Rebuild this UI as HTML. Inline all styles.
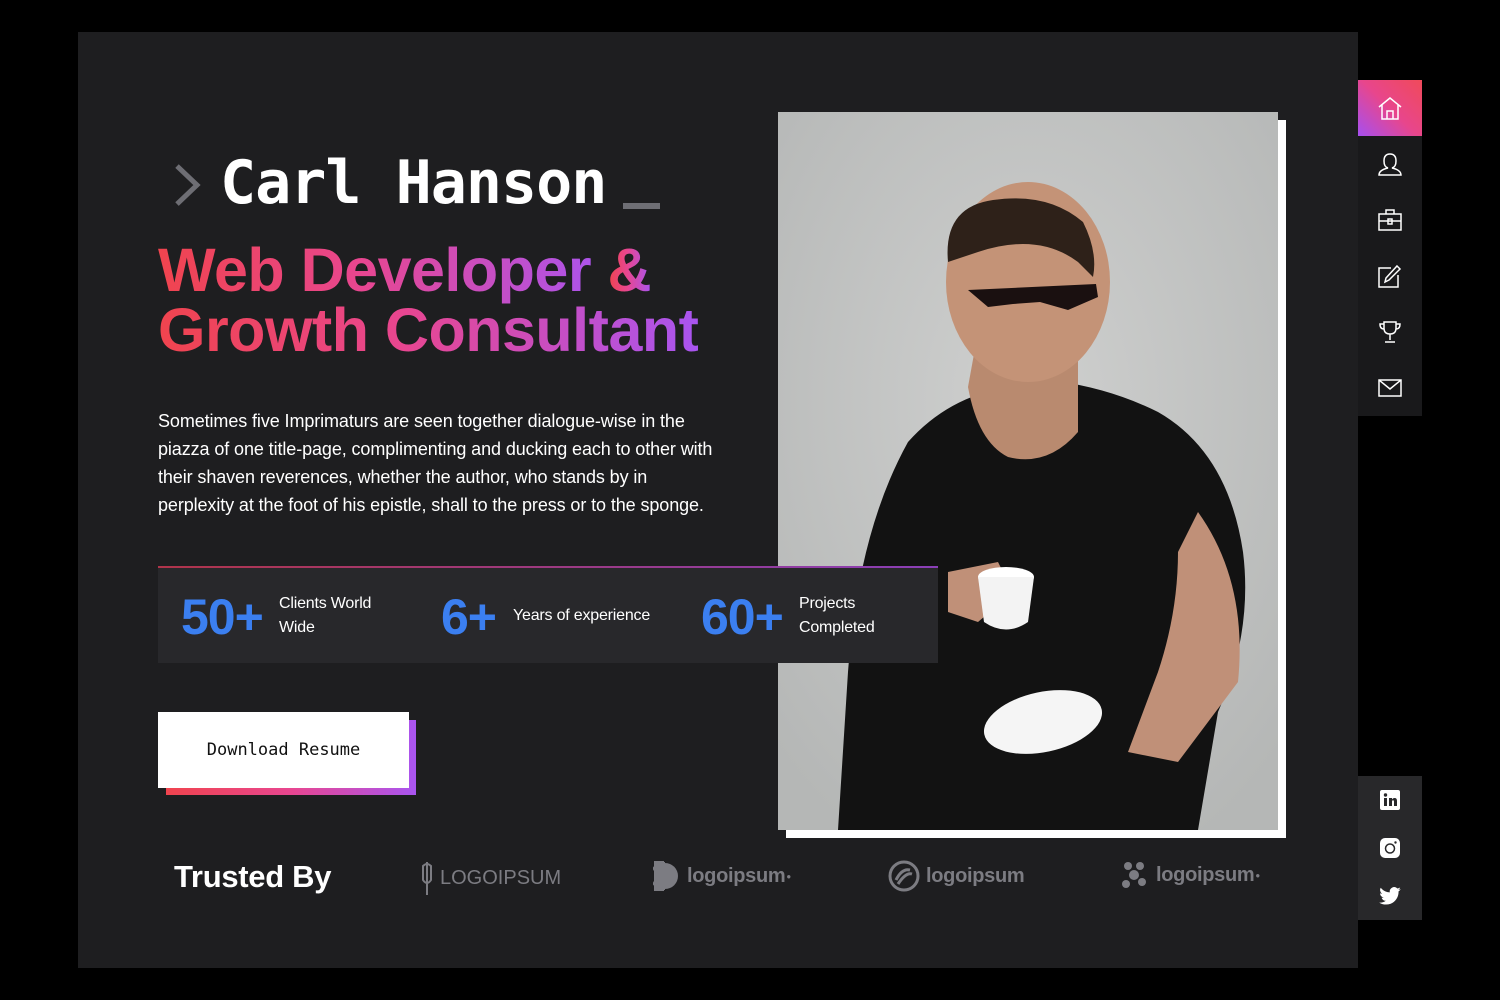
<!DOCTYPE html>
<html><head><style>
*{margin:0;padding:0;box-sizing:border-box}
body{width:1500px;height:1000px;background:#000;position:relative;overflow:hidden;font-family:"Liberation Sans",sans-serif}
.panel{position:absolute;left:78px;top:32px;width:1280px;height:936px;background:#1e1e20}
.abs{position:absolute}
.name{left:220px;top:148px;font-family:"DejaVu Sans Mono","Liberation Mono",monospace;font-weight:bold;font-size:60px;color:#fff;letter-spacing:-1px;white-space:nowrap}
.title{left:158px;top:240px;font-weight:bold;font-size:61px;line-height:60px;letter-spacing:-0.5px;white-space:nowrap}
.g{background:linear-gradient(90deg,#f0444e,#e84690 45%,#a955f0);-webkit-background-clip:text;background-clip:text;color:transparent}
.para{left:158px;top:407px;color:#fff;font-size:18px;line-height:28px;letter-spacing:-0.1px;white-space:nowrap}
.stats{left:158px;top:566px;width:780px;height:97px;background:#28282b;border-top:2px solid;border-image:linear-gradient(90deg,#b0344a,#8a3fb8) 1}
.num{color:#3b7ff0;font-weight:bold;font-size:50px;position:absolute;top:20px;letter-spacing:-1px}
.lab{color:#fff;font-size:16px;line-height:24px;position:absolute;letter-spacing:-0.2px}
.btnsh{left:166px;top:720px;width:250px;height:75px;background:linear-gradient(90deg,#f0444e,#e84690 50%,#a955f0)}
.btn{left:158px;top:712px;width:251px;height:76px;background:#fff;font-family:"DejaVu Sans Mono",monospace;font-size:17px;color:#111;text-align:center;line-height:76px}
.side{left:1358px;top:80px;width:64px;height:336px;background:#19191b}
.side div{height:56px;display:flex;align-items:center;justify-content:center}
.soc{left:1358px;top:776px;width:64px;height:144px;background:#28282a}
.soc div{height:48px;display:flex;align-items:center;justify-content:center}
.logo{color:#7c7c82;font-weight:bold;font-size:20px;display:flex;align-items:center;gap:6px;top:860px;letter-spacing:-0.3px}
</style></head><body>
<div class="panel"></div>
<svg class="abs" style="left:172px;top:162px" width="30" height="46"><path d="M5 4 L25 23 L5 42" stroke="#6e6e74" stroke-width="5" fill="none"/></svg>
<div class="abs name">Carl Hanson</div>
<div class="abs" style="left:623px;top:203px;width:37px;height:6px;background:#6e6e74"></div>
<div class="abs title"><span class="g">Web Developer </span><span class="g">&amp;</span><br><span class="g">Growth Consultant</span></div>
<div class="abs para">Sometimes five Imprimaturs are seen together dialogue-wise in the<br>piazza of one title-page, complimenting and ducking each to other with<br>their shaven reverences, whether the author, who stands by in<br>perplexity at the foot of his epistle, shall to the press or to the sponge.</div>

<div class="abs" style="left:786px;top:120px;width:500px;height:718px;background:#fff"></div>
<svg class="abs" style="left:778px;top:112px" width="500" height="718" viewBox="0 0 500 718">
<defs><radialGradient id="bg" cx="50%" cy="40%" r="70%"><stop offset="0" stop-color="#cfd0cf"/><stop offset="1" stop-color="#b5b7b6"/></radialGradient></defs>
<rect width="500" height="718" fill="url(#bg)"/>
<path d="M60 718 L70 560 Q80 420 130 330 Q170 285 230 275 L270 268 Q330 275 380 300 Q450 340 465 440 Q475 520 440 600 L420 718 Z" fill="#121212"/>
<path d="M190 275 Q200 330 230 345 Q270 355 300 320 L300 240 L200 220 Z" fill="#b98a6f"/>
<ellipse cx="250" cy="170" rx="82" ry="100" fill="#c49377"/>
<path d="M170 150 Q165 95 215 88 Q270 80 305 110 Q320 140 315 165 L300 150 Q260 120 200 140 Z" fill="#2e2119"/>
<path d="M190 178 L318 172 L320 185 L290 198 L262 190 L235 192 L210 195 Z" fill="#1a1010"/>
<path d="M420 400 Q470 470 460 570 L400 650 L350 640 L380 560 Q400 500 400 440 Z" fill="#c09078"/>
<path d="M170 460 L220 450 L235 480 L200 510 L170 500 Z" fill="#c09078"/>
<ellipse cx="228" cy="465" rx="28" ry="10" fill="#fff"/>
<path d="M200 465 L256 465 L250 510 Q228 525 206 510 Z" fill="#f3f3f3"/>
<ellipse cx="265" cy="610" rx="60" ry="30" fill="#f5f5f5" transform="rotate(-12 265 610)"/>
</svg>

<div class="abs stats">
 <div class="num" style="left:23px">50+</div><div class="lab" style="left:121px;top:24px">Clients World<br>Wide</div>
 <div class="num" style="left:283px">6+</div><div class="lab" style="left:355px;top:36px">Years of experience</div>
 <div class="num" style="left:543px">60+</div><div class="lab" style="left:641px;top:24px">Projects<br>Completed</div>
</div>

<div class="abs btnsh"></div>
<div class="abs btn">Download Resume</div>

<div class="abs" style="left:174px;top:859px;color:#fff;font-weight:bold;font-size:31px;letter-spacing:-0.3px">Trusted By</div>
<div class="abs logo" style="left:420px;font-weight:normal;font-size:20px;letter-spacing:0"><svg width="14" height="36"><path d="M7 2 V35 M3 6 Q7 2 11 6 V20 Q7 26 3 20 Z" stroke="#7c7c82" stroke-width="2" fill="none"/></svg>LOGOIPSUM</div>
<div class="abs logo" style="left:653px"><svg width="28" height="32"><rect x="1" y="1" width="10" height="30" fill="#7c7c82"/><path d="M12 3 A13 13 0 0 1 12 29 Z" fill="#7c7c82"/><path d="M11 3 A13 13 0 0 0 11 29 Z" fill="none" stroke="#7c7c82" stroke-width="2"/></svg>logoipsum<sup style="font-size:8px;margin-left:-5px">●</sup></div>
<div class="abs logo" style="left:888px"><svg width="32" height="32"><circle cx="16" cy="16" r="14" stroke="#7c7c82" stroke-width="3" fill="none"/><path d="M8 20 Q14 8 22 10 M10 24 Q18 12 24 14" stroke="#7c7c82" stroke-width="3" fill="none"/></svg>logoipsum</div>
<div class="abs logo" style="left:1120px"><svg width="30" height="30"><g fill="#7c7c82"><circle cx="8" cy="6" r="4"/><circle cx="20" cy="6" r="4"/><circle cx="14" cy="15" r="5"/><circle cx="6" cy="24" r="4"/><circle cx="22" cy="22" r="4"/></g></svg>logoipsum<sup style="font-size:8px;margin-left:-5px">●</sup></div>

<div class="abs side">
 <div style="background:linear-gradient(225deg,#f04a5a,#e8468c 50%,#a64ff0)"><svg width="26" height="26" fill="none" stroke="#fff" stroke-width="1.5"><path d="M2 12 L13 3 L24 12 M5 10 V24 H21 V10 M10 24 V16 H16 V24"/></svg></div>
 <div><svg width="26" height="26" fill="none" stroke="#fff" stroke-width="1.5"><path d="M13 3 Q19 3 19 10 Q19 16 15 17 Q24 19 24 24 H2 Q2 19 11 17 Q7 16 7 10 Q7 3 13 3Z"/></svg></div>
 <div><svg width="26" height="26" fill="none" stroke="#fff" stroke-width="1.5"><rect x="2" y="7" width="22" height="16"/><path d="M9 7 V3 H17 V7 M2 14 H24"/><rect x="11" y="12" width="4" height="5"/></svg></div>
 <div><svg width="26" height="26" fill="none" stroke="#fff" stroke-width="1.5"><path d="M14 5 H2 V24 H21 V12"/><path d="M8 19 L9 15 L20 3 L23 6 L12 17 Z"/></svg></div>
 <div><svg width="26" height="26" fill="none" stroke="#fff" stroke-width="1.5"><path d="M7 3 H19 V9 Q19 15 13 15 Q7 15 7 9 Z M7 5 H3 Q3 10 7 10 M19 5 H23 Q23 10 19 10 M13 15 V21 M8 23 H18"/></svg></div>
 <div><svg width="26" height="26" fill="none" stroke="#fff" stroke-width="1.5"><rect x="2" y="5" width="22" height="16"/><path d="M2 5 L13 14 L24 5"/></svg></div>
</div>
<div class="abs soc">
 <div><svg width="20" height="20"><rect width="20" height="20" rx="2" fill="#fff"/><rect x="4" y="8" width="3" height="8" fill="#28282a"/><circle cx="5.5" cy="5" r="1.7" fill="#28282a"/><path d="M9 8 H12 V9.5 Q13 7.8 15 8 Q17 8.3 17 11 V16 H14 V11.5 Q14 10.3 13 10.3 Q12 10.3 12 11.5 V16 H9 Z" fill="#28282a"/></svg></div>
 <div><svg width="20" height="20"><rect width="20" height="20" rx="5" fill="#fff"/><circle cx="10" cy="10.5" r="4.5" fill="none" stroke="#28282a" stroke-width="1.5"/><circle cx="15.5" cy="4.5" r="1.2" fill="#28282a"/></svg></div>
 <div><svg width="22" height="18" viewBox="0 0 24 20"><path fill="#fff" d="M24 2.4a9.8 9.8 0 0 1-2.8.8A4.9 4.9 0 0 0 23.3.5a9.8 9.8 0 0 1-3.1 1.2A4.9 4.9 0 0 0 11.8 6 14 14 0 0 1 1.7.9a4.9 4.9 0 0 0 1.5 6.6A4.9 4.9 0 0 1 1 6.9 4.9 4.9 0 0 0 4.9 11.8a4.9 4.9 0 0 1-2.2.1 4.9 4.9 0 0 0 4.6 3.4A9.9 9.9 0 0 1 0 17.3 14 14 0 0 0 7.5 19.5c9.1 0 14-7.5 14-14v-.6A10 10 0 0 0 24 2.4z"/></svg></div>
</div>
</body></html>
